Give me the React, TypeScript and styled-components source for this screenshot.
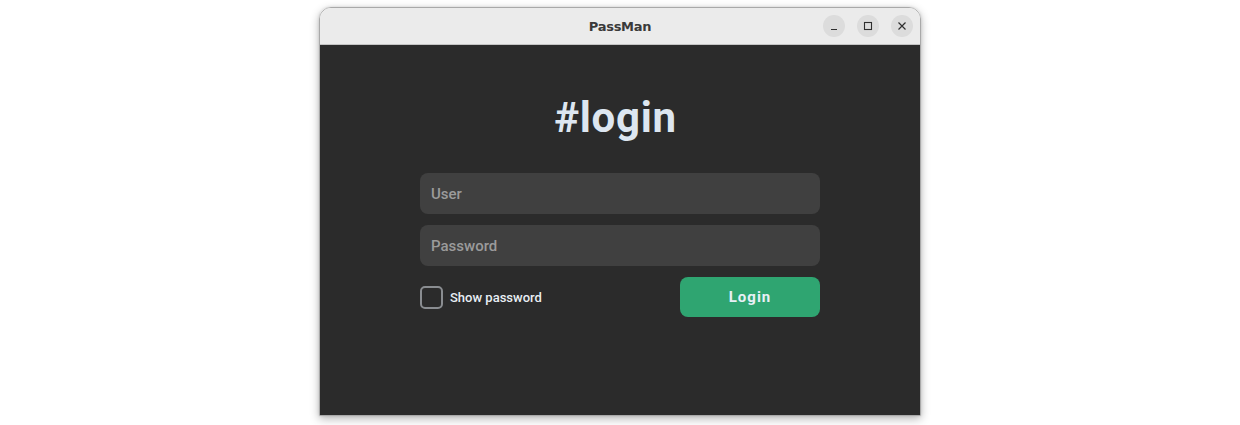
import React, { useState } from "react";
import styled, { createGlobalStyle } from "styled-components";

const Global = createGlobalStyle`
  html, body { margin: 0; padding: 0; background: #ffffff; }
  body { font-family: Roboto, "Noto Sans", sans-serif; }
  * { box-sizing: border-box; }
`;

const Page = styled.div`
  width: 1240px;
  height: 425px;
  display: flex;
  justify-content: center;
  align-items: flex-start;
  padding-top: 7px;
`;

const Window = styled.div`
  width: 602px;
  height: 409px;
  display: flex;
  flex-direction: column;
  border: 1px solid #a9a9a9;
  border-radius: 12px 12px 0 0;
  overflow: hidden;
  box-shadow: 0 3px 10px rgba(0, 0, 0, 0.28), 0 0 3px rgba(0, 0, 0, 0.12);
`;

const TitleBar = styled.div`
  height: 37px;
  flex: none;
  background: #ebebeb;
  border-bottom: 1px solid #c4c4c4;
  display: grid;
  grid-template-columns: 1fr auto 1fr;
  align-items: center;
  padding: 0 7px;
`;

const Title = styled.div`
  grid-column: 2;
  font-family: "DejaVu Sans", sans-serif;
  font-weight: bold;
  font-size: 13px;
  color: #3a3a3a;
  letter-spacing: -0.3px;
  padding-top: 1px;
`;

const Controls = styled.div`
  grid-column: 3;
  justify-self: end;
  display: flex;
  gap: 12px;
`;

const CtlButton = styled.div`
  width: 22px;
  height: 22px;
  border-radius: 50%;
  background: #dcdcdc;
  display: flex;
  align-items: center;
  justify-content: center;
  color: #2e2e2e;
`;

const Body = styled.div`
  flex: 1;
  background: #2b2b2b;
  display: flex;
  flex-direction: column;
  align-items: center;
  padding-top: 46px;
`;

const Heading = styled.h1`
  margin: 0 9px 0 0;
  font-family: Roboto, sans-serif;
  font-weight: 700;
  font-size: 42px;
  line-height: 54px;
  color: #dde6f0;
  letter-spacing: 0.7px;
`;

const Form = styled.div`
  width: 400px;
  margin-top: 28px;
  display: flex;
  flex-direction: column;
  gap: 11px;
`;

const Input = styled.input`
  width: 100%;
  height: 41px;
  border: none;
  outline: none;
  border-radius: 8px;
  background: #404040;
  padding: 0 11px;
  font-family: Roboto, sans-serif;
  font-weight: 500;
  font-size: 15px;
  color: #e6e6e6;
  &::placeholder { color: #9b9b9b; }
`;

const Row = styled.div`
  display: flex;
  align-items: center;
  justify-content: space-between;
`;

const CheckLabel = styled.label`
  display: flex;
  align-items: center;
  gap: 7px;
  font-family: Roboto, sans-serif;
  font-weight: 500;
  font-size: 13px;
  color: #e8eef4;
  cursor: pointer;
`;

const Box = styled.span<{ $on: boolean }>`
  width: 23px;
  height: 23px;
  border: 2px solid #8a8d91;
  border-radius: 5px;
  background: ${(p) => (p.$on ? "#2fa571" : "transparent")};
`;

const LoginButton = styled.button`
  width: 140px;
  height: 40px;
  border: none;
  border-radius: 8px;
  background: #2fa571;
  color: #e8f0f6;
  font-family: Roboto, sans-serif;
  font-weight: 700;
  font-size: 15px;
  letter-spacing: 1px;
  cursor: pointer;
`;

export default function App() {
  const [show, setShow] = useState(false);
  return (
    <>
      <Global />
      <Page>
        <Window>
          <TitleBar>
            <Title>PassMan</Title>
            <Controls>
              <CtlButton>
                <svg width="10" height="10" viewBox="0 0 10 10">
                  <path d="M2 8.5h6" stroke="currentColor" strokeWidth="1.1" />
                </svg>
              </CtlButton>
              <CtlButton>
                <svg width="10" height="10" viewBox="0 0 10 10">
                  <rect x="1.5" y="1.5" width="7" height="7" fill="none" stroke="currentColor" strokeWidth="1.1" />
                </svg>
              </CtlButton>
              <CtlButton>
                <svg width="10" height="10" viewBox="0 0 10 10">
                  <path d="M1.5 1.5l7 7M8.5 1.5l-7 7" stroke="currentColor" strokeWidth="1.2" />
                </svg>
              </CtlButton>
            </Controls>
          </TitleBar>
          <Body>
            <Heading>#login</Heading>
            <Form>
              <Input placeholder="User" />
              <Input placeholder="Password" type={show ? "text" : "password"} />
              <Row>
                <CheckLabel onClick={() => setShow(!show)}>
                  <Box $on={show} />
                  Show password
                </CheckLabel>
                <LoginButton>Login</LoginButton>
              </Row>
            </Form>
          </Body>
        </Window>
      </Page>
    </>
  );
}
